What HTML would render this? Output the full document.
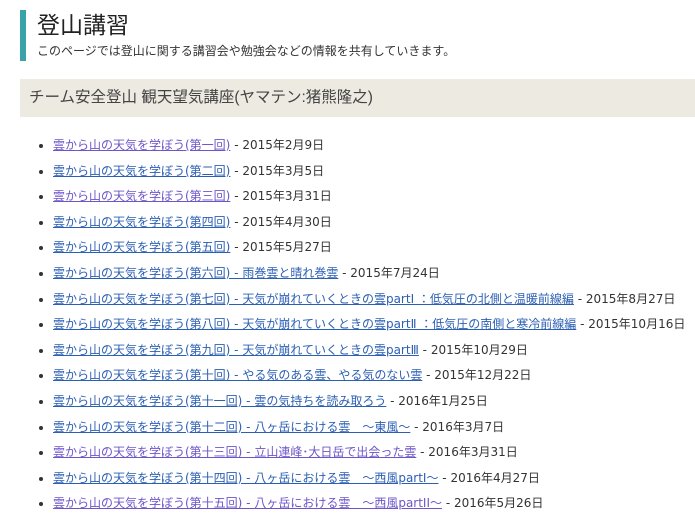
<!DOCTYPE html>
<html><head><meta charset="utf-8"><style>
body{margin:0;width:695px;height:516px;overflow:hidden;background:#fff;font-family:"DejaVu Sans","Noto Sans CJK JP",sans-serif;color:#333;}
.bar{position:absolute;left:20px;top:10px;width:6px;height:51px;background:#3aa3a8;}
h1{position:absolute;left:37px;top:10px;margin:0;font-size:23px;font-weight:normal;color:#222;line-height:30px;font-family:"Liberation Sans","Noto Sans CJK JP",sans-serif;}
.sub{position:absolute;left:37px;top:43px;font-size:12px;line-height:16px;color:#333;font-family:"Liberation Sans","Noto Sans CJK JP",sans-serif;}
.hd{position:absolute;left:20px;top:79px;width:675px;height:38px;background:#edeae2;}
.hd span{position:absolute;left:9px;top:9px;font-size:15.5px;line-height:20px;color:#444;font-family:"Liberation Sans","Noto Sans CJK JP",sans-serif;}
ul{position:absolute;left:20px;top:133px;margin:0;padding:0 0 0 33px;font-size:12px;line-height:25.6px;}
li{white-space:nowrap;}
a{color:#2b5fb4;text-decoration:underline;}
a.v{color:#6e55c9;}
</style></head><body>
<div class="bar"></div>
<h1>登山講習</h1>
<div class="sub">このページでは登山に関する講習会や勉強会などの情報を共有していきます。</div>
<div class="hd"><span>チーム安全登山 観天望気講座(ヤマテン:猪熊隆之)</span></div>
<ul>
<li><a class="v">雲から山の天気を学ぼう(第一回)</a> - 2015年2月9日</li>
<li><a>雲から山の天気を学ぼう(第二回)</a> - 2015年3月5日</li>
<li><a class="v">雲から山の天気を学ぼう(第三回)</a> - 2015年3月31日</li>
<li><a>雲から山の天気を学ぼう(第四回)</a> - 2015年4月30日</li>
<li><a>雲から山の天気を学ぼう(第五回)</a> - 2015年5月27日</li>
<li><a>雲から山の天気を学ぼう(第六回) - 雨巻雲と晴れ巻雲</a> - 2015年7月24日</li>
<li><a>雲から山の天気を学ぼう(第七回) - 天気が崩れていくときの雲partⅠ ：低気圧の北側と温暖前線編</a> - 2015年8月27日</li>
<li><a>雲から山の天気を学ぼう(第八回) - 天気が崩れていくときの雲partⅡ ：低気圧の南側と寒冷前線編</a> - 2015年10月16日</li>
<li><a>雲から山の天気を学ぼう(第九回) - 天気が崩れていくときの雲partⅢ</a> - 2015年10月29日</li>
<li><a>雲から山の天気を学ぼう(第十回) - やる気のある雲、やる気のない雲</a> - 2015年12月22日</li>
<li><a>雲から山の天気を学ぼう(第十一回) - 雲の気持ちを読み取ろう</a> - 2016年1月25日</li>
<li><a>雲から山の天気を学ぼう(第十二回) - 八ヶ岳における雲　～東風～</a> - 2016年3月7日</li>
<li><a class="v">雲から山の天気を学ぼう(第十三回) - 立山連峰･大日岳で出会った雲</a> - 2016年3月31日</li>
<li><a>雲から山の天気を学ぼう(第十四回) - 八ヶ岳における雲　～西風partI～</a> - 2016年4月27日</li>
<li><a class="v">雲から山の天気を学ぼう(第十五回) - 八ヶ岳における雲　～西風partII～</a> - 2016年5月26日</li>
</ul>
</body></html>
